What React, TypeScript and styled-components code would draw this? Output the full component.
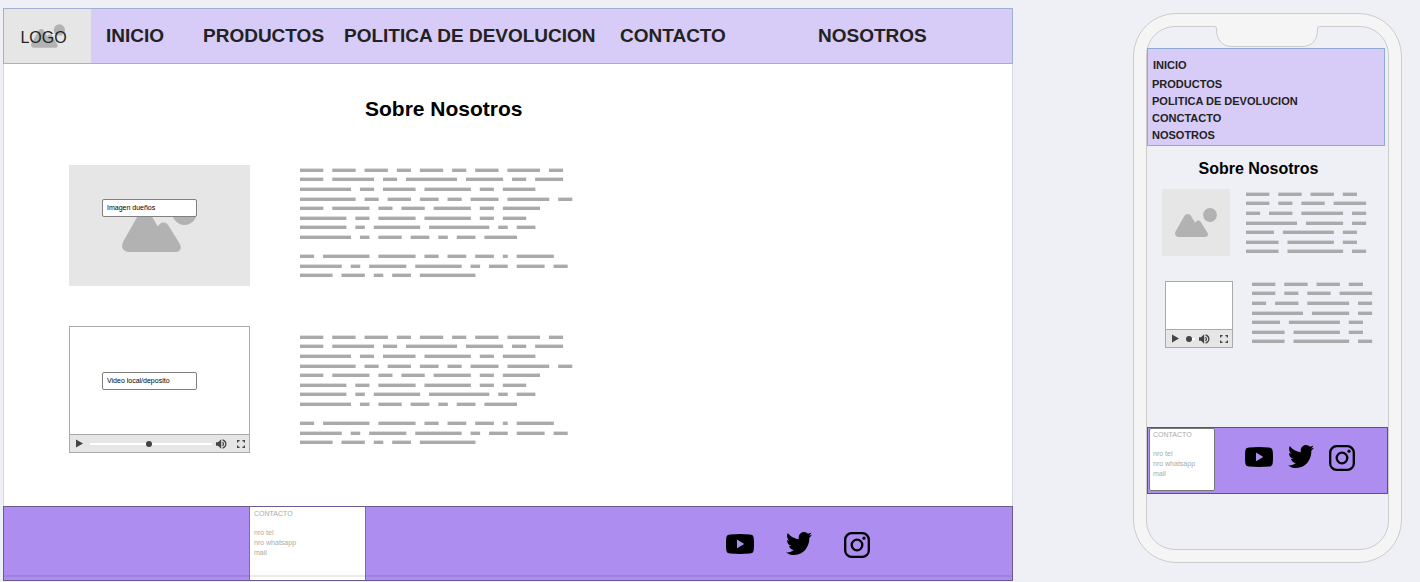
import React from "react";
import styled, { createGlobalStyle } from "styled-components";

const line = "#aaaaaa";
const canvas = "#eff0f5";
const lilac = "#d7ccf7";
const violet = "#ad8ef0";

const GlobalStyle = createGlobalStyle`
  * { box-sizing: border-box; }
  body {
    margin: 0;
    background: ${canvas};
    color: #000;
    font-family: "Liberation Sans", Arial, Helvetica, sans-serif;
  }
  h1, h2, p, figure, ul { margin: 0; padding: 0; }
  svg { display: block; }
`;

const Board = styled.div`
  display: grid;
  grid-template-columns: minmax(0, 1fr) auto;
  align-items: start;
  gap: 120px;
  padding: 8px 18px 0 3px;
`;

/* Desktop frame */
const Desktop = styled.section`
  background: #fff;
`;

const Header = styled.header`
  display: flex;
  height: 56px;
  background: ${lilac};
  border: 1px solid #9fb2d2;
`;

const Logo = styled.a`
  display: grid;
  place-items: center;
  width: 87px;
  background: #e6e6e6;
  color: #222;
  font-size: 16px;
  line-height: 20px;
  text-decoration: none;
  > * { grid-area: 1 / 1; }
`;

const LogoText = styled.span`
  padding: 4px 8px 0 0;
`;

const DesktopNav = styled.nav`
  flex: 1;
  display: grid;
  grid-template-columns:
    minmax(0, 97fr) minmax(0, 141fr) minmax(0, 276fr)
    minmax(0, 198fr) minmax(0, 194fr);
  align-items: center;
  padding-left: 15px;
`;

const NavLink = styled.a<{ $small?: boolean }>`
  color: #222;
  font-weight: bold;
  font-size: ${(p) => (p.$small ? 11 : 19)}px;
  line-height: ${(p) => (p.$small ? 17 : 22)}px;
  white-space: nowrap;
  text-decoration: none;
`;

const Main = styled.main`
  padding: 33px 65px 53px;
  border: solid #d9dadf;
  border-width: 0 1px;
`;

const Title = styled.h1`
  padding-left: 296px;
  font-size: 21px;
  line-height: 24px;
`;

const Rows = styled.div`
  display: grid;
  gap: 40px;
  margin-top: 44px;
`;

const Row = styled.div`
  display: grid;
  grid-template-columns: 181px minmax(0, 1fr);
  gap: 50px;
`;

const Copy = styled.div<{ $top: number }>`
  padding-top: ${(p) => p.$top}px;
`;

const Picture = styled.figure<{ $height: number }>`
  position: relative;
  display: grid;
  place-items: center;
  height: ${(p) => p.$height}px;
  background: #e6e6e6;
`;

const Tag = styled.figcaption<{ $top: number; $left: number }>`
  position: absolute;
  top: ${(p) => p.$top}px;
  left: ${(p) => p.$left}px;
  width: 95px;
  padding: 0 4px;
  border: 1px solid #808080;
  border-radius: 2px;
  background: #fff;
  font-size: 7px;
  line-height: 16px;
`;

const Player = styled.figure<{ $height: number }>`
  position: relative;
  display: flex;
  flex-direction: column;
  height: ${(p) => p.$height}px;
  border: 1px solid ${line};
  background: #fff;
`;

const Controls = styled.div`
  display: flex;
  align-items: center;
  height: 18px;
  margin-top: auto;
  padding: 0 4px 0 6px;
  border-top: 1px solid ${line};
  background: #e6e6e6;
`;

const ControlButton = styled.button<{ $gap?: number }>`
  margin: 0 ${(p) => p.$gap ?? 0}px 0 0;
  padding: 0;
  border: 0;
  background: none;
  color: #444;
`;

const Seek = styled.input`
  flex: 1;
  appearance: none;
  width: 0;
  min-width: 0;
  height: 6px;
  margin: 0 4px 0 0;
  background: linear-gradient(#fff, #fff) center / 100% 2px no-repeat;
  &::-webkit-slider-thumb {
    appearance: none;
    width: 6px;
    height: 6px;
    border-radius: 50%;
    background: #444;
  }
`;

const Footer = styled.footer`
  position: relative;
  display: grid;
  grid-template-columns: 245px 117px minmax(0, 1fr);
  height: 75px;
  background: ${violet};
  border: 1px solid #6b5a90;
  &::after {
    content: "";
    position: absolute;
    inset: auto 0 3px;
    height: 2px;
    background: rgba(0, 0, 0, 0.08);
  }
`;

const Contact = styled.address<{ $mobile?: boolean }>`
  padding: ${(p) => (p.$mobile ? "1px 3px" : "2px 4px")};
  border: solid #777;
  border-width: ${(p) => (p.$mobile ? "1px" : "0 1px")};
  border-radius: ${(p) => (p.$mobile ? 2 : 0)}px;
  background: #fff;
  color: #aaa;
  font-size: 7px;
  font-style: normal;
  line-height: 10px;
`;

const ContactTitle = styled.h2`
  margin-bottom: 9px;
  font-size: 7px;
  font-weight: normal;
`;

const Social = styled.div<{ $mobile?: boolean }>`
  display: flex;
  justify-content: flex-end;
  gap: ${(p) => (p.$mobile ? 15 : 32)}px;
  padding: ${(p) => (p.$mobile ? "17px 32px 0 0" : "25px 142px 0 0")};
  a { color: #000; }
  a:first-child { padding-top: 2px; }
`;

/* Phone frame */
const Phone = styled.section`
  width: 269px;
  margin-top: 5px;
  padding: 12px;
  border: 1px solid #ccc;
  border-radius: 43px;
  background: #f5f5f5;
`;

const Screen = styled.div`
  position: relative;
  padding: 21px 0 55px;
  border: 1px solid #ccc;
  border-radius: 29px;
  background: ${canvas};
`;

const Notch = styled.svg`
  position: absolute;
  top: -1px;
  left: 67px;
`;

const PhoneNav = styled.nav`
  display: grid;
  margin-right: 3px;
  padding: 8px 4px 0;
  height: 98px;
  align-content: start;
  border: 1px solid #8fa9d3;
  background: ${lilac};
  a:first-child { margin: 0 0 2px 1px; }
`;

const PhoneTitle = styled.h1`
  margin-top: 13px;
  padding-right: 18px;
  font-size: 16px;
  line-height: 20px;
  text-align: center;
`;

const PhoneRow = styled.div<{ $top: number; $left: number; $gap: number }>`
  display: grid;
  grid-template-columns: 68px minmax(0, 1fr);
  gap: ${(p) => p.$gap}px;
  margin-top: ${(p) => p.$top}px;
  padding-left: ${(p) => p.$left}px;
`;

const PhoneFooter = styled.footer`
  display: grid;
  grid-template-columns: 66px minmax(0, 1fr);
  height: 67px;
  margin-top: 78px;
  padding: 0 0 2px 1px;
  border: 1px solid #5f4f85;
  background: ${violet};
`;

const longText = [
  [5, 5, 5, 3, 5, 3, 5, 7, 3],
  [5, 9, 3, 11, 8, 3, 6],
  [11, 3, 7, 10, 3, 7],
  [12, 3, 5, 4, 3, 6, 9, 3],
  [5, 8, 3, 5, 8, 3, 8],
  [10, 3, 8, 10, 3, 5],
  [10, 2, 10, 13, 2, 4],
  [11, 2, 5, 4, 2, 4, 7],
  [],
  [3, 10, 8, 3, 4, 4, 1, 8],
  [9, 2, 8, 10, 2, 4, 6, 3],
  [7, 5, 2, 4, 12],
];

const shortText = [
  [5, 5, 5, 3],
  [5, 3, 5, 7],
  [3, 5, 9, 3],
  [11, 8, 3],
  [6, 11, 3],
  [7, 10, 3],
  [7, 12, 3],
];

/* Placeholder copy: every number is a word length in characters. */
function Placeholder({ lines, width }: { lines: number[][]; width: number }) {
  const unit = 4.61;
  return (
    <svg width={width} height={Math.round(lines.length * 9.6)} fill={line} aria-hidden="true">
      {lines.map((words, row) => {
        let column = 0;
        return words.map((length, i) => {
          const x = column * unit;
          column += length + 2;
          return (
            <rect
              key={`${row}-${i}`}
              x={x}
              y={Math.floor(row * 9.6 + 0.3) + 0.6}
              width={length * unit + 0.3}
              height={3.4}
            />
          );
        });
      })}
    </svg>
  );
}

function Mountains({ width, height }: { width: number; height: number }) {
  return (
    <svg width={width} height={height} viewBox="0 0 42 29" fill="#b2b2b2" aria-hidden="true">
      <path d="M4 29C.4 29-.8 26 .7 23.2L9.2 8.2C11 5.2 14.4 5.2 16.200 8.200L20 14.800 21.300 13.300C22.500 12.100 24.600 12.200 25.800 13.900L32.400 24.600C33.700 27 32.500 29 30 29Z" />
      <circle cx="35" cy="7" r="6.9" />
    </svg>
  );
}

function PlayerControls({ value }: { value: number }) {
  return (
    <Controls>
      <ControlButton aria-label="Reproducir" $gap={7}>
        <svg width="7" height="9" fill="currentColor"><path d="M0 .5 7 4.500 0 8.500Z" /></svg>
      </ControlButton>
      <Seek type="range" aria-label="Progreso" defaultValue={value} />
      <ControlButton aria-label="Volumen" $gap={10}>
        <svg width="11" height="10" viewBox="0 0 11 10" fill="currentColor">
          <path d="M0 3.2H2L5.200 .3V9.700L2 6.800H0Z" />
          <path d="M6.600 3Q8.200 5 6.600 7M6.600 .9C11 2.400 11 7.600 6.600 9.100" fill="none" stroke="currentColor" strokeWidth="1.200" />
        </svg>
      </ControlButton>
      <ControlButton aria-label="Pantalla completa">
        <svg width="8" height="8" fill="none" stroke="currentColor" strokeWidth="1.400">
          <path d="M.6 2.600V.6H2.600M5.400 .6H7.400V2.600M7.400 5.400V7.400H5.400M2.600 7.400H.6V5.400" />
        </svg>
      </ControlButton>
    </Controls>
  );
}

function ContactCard({ mobile }: { mobile?: boolean }) {
  return (
    <Contact $mobile={mobile}>
      <ContactTitle>CONTACTO</ContactTitle>
      <p>nro tel</p>
      <p>nro whatsapp</p>
      <p>mail</p>
    </Contact>
  );
}

function SocialLinks({ mobile }: { mobile?: boolean }) {
  return (
    <Social $mobile={mobile}>
      <a href="#youtube" aria-label="YouTube">
        <svg width="28" height="20" viewBox="0 0 28 20" fill="currentColor">
          <path fillRule="evenodd" d="M4 .5Q14-.4 24 .5C27 .7 27.6 2.2 27.8 5Q28.2 10 27.8 15C27.6 17.8 27 19.3 24 19.5Q14 20.4 4 19.5C1 19.3 .4 17.8 .2 15Q-.2 10 .2 5C.4 2.2 1 .7 4 .5ZM11 5.6V14.2L18.3 9.9Z" />
        </svg>
      </a>
      <a href="#twitter" aria-label="Twitter">
        <svg width="26" height="23" viewBox="0 48 512 416" preserveAspectRatio="none" fill="currentColor">
          <path d="M459.37 151.716c.325 4.548.325 9.097.325 13.645 0 138.72-105.583 298.558-298.558 298.558-59.452 0-114.68-17.219-161.137-47.106 8.447.974 16.568 1.299 25.34 1.299 49.055 0 94.213-16.568 130.274-44.832-46.132-.975-84.792-31.188-98.112-72.772 6.498.974 12.995 1.624 19.818 1.624 9.421 0 18.843-1.3 27.614-3.573-48.081-9.747-84.143-51.98-84.143-102.985v-1.299c13.969 7.797 30.214 12.67 47.431 13.319-28.264-18.843-46.781-51.005-46.781-87.391 0-19.492 5.197-37.36 14.294-52.954 51.655 63.675 129.3 105.258 216.365 109.807-1.624-7.797-2.599-15.918-2.599-24.04 0-57.828 46.782-104.934 104.934-104.934 30.213 0 57.502 12.67 76.67 33.137 23.715-4.548 46.456-13.32 66.599-25.34-7.798 24.366-24.366 44.833-46.132 57.827 21.117-2.273 41.584-8.122 60.426-16.243-14.292 20.791-32.161 39.308-52.628 54.253z" />
        </svg>
      </a>
      <a href="#instagram" aria-label="Instagram">
        <svg width="26" height="26" viewBox="0 0 26 26" fill="none" stroke="currentColor" strokeWidth="2.3">
          <rect x="1.2" y="1.2" width="23.6" height="23.6" rx="6.4" />
          <circle cx="13" cy="13" r="5.3" />
          <circle cx="20" cy="6.2" r="1.6" fill="currentColor" stroke="none" />
        </svg>
      </a>
    </Social>
  );
}

const sections = [
  ["#inicio", "INICIO"],
  ["#productos", "PRODUCTOS"],
  ["#politica", "POLITICA DE DEVOLUCION"],
  ["#contacto", "CONTACTO"],
  ["#nosotros", "NOSOTROS"],
];

const phoneSections = [
  ["#inicio", "INICIO"],
  ["#productos", "PRODUCTOS"],
  ["#politica", "POLITICA DE DEVOLUCION"],
  ["#contacto", "CONCTACTO"],
  ["#nosotros", "NOSOTROS"],
];

export default function App() {
  return (
    <>
      <GlobalStyle />
      <Board>
        <Desktop>
          <Header>
            <Logo href="#inicio">
              <Mountains width={34} height={24} />
              <LogoText>LOGO</LogoText>
            </Logo>
            <DesktopNav>
              {sections.map(([href, label]) => (
                <NavLink key={href} href={href}>{label}</NavLink>
              ))}
            </DesktopNav>
          </Header>
          <Main>
            <Title>Sobre Nosotros</Title>
            <Rows>
              <Row>
                <Picture $height={121}>
                  <Mountains width={75} height={52} />
                  <Tag $top={34} $left={33}>Imagen dueños</Tag>
                </Picture>
                <Copy $top={3}><Placeholder lines={longText} width={274} /></Copy>
              </Row>
              <Row>
                <Player $height={127}>
                  <Tag $top={45} $left={32}>Video local/deposito</Tag>
                  <PlayerControls value={48} />
                </Player>
                <Copy $top={9}><Placeholder lines={longText} width={274} /></Copy>
              </Row>
            </Rows>
          </Main>
          <Footer>
            <span />
            <ContactCard />
            <SocialLinks />
          </Footer>
        </Desktop>

        <Phone>
          <Screen>
            <Notch width="106" height="22" viewBox="0 0 106 22">
              <path d="M0 0H106V.5H105Q103.500 .5 103.500 3C103.500 14 98 20.500 88 20.500H18C8 20.500 2.500 14 2.500 3Q2.500 .5 1 .5H0Z" fill="#f5f5f5" />
              <path d="M0 .5H1Q2.500 .5 2.500 3C2.500 14 8 20.500 18 20.500H88C98 20.500 103.500 14 103.500 3Q103.500 .5 105 .5H106" fill="none" stroke="#ccc" />
            </Notch>
            <PhoneNav>
              {phoneSections.map(([href, label]) => (
                <NavLink key={href} href={href} $small>{label}</NavLink>
              ))}
            </PhoneNav>
            <PhoneTitle>Sobre Nosotros</PhoneTitle>
            <PhoneRow $top={10} $left={15} $gap={16}>
              <Picture $height={67}><Mountains width={42} height={29} /></Picture>
              <Copy $top={3}><Placeholder lines={shortText} width={122} /></Copy>
            </PhoneRow>
            <PhoneRow $top={22} $left={18} $gap={19}>
              <Player $height={67}><PlayerControls value={0} /></Player>
              <Copy $top={1}><Placeholder lines={shortText} width={122} /></Copy>
            </PhoneRow>
            <PhoneFooter>
              <ContactCard mobile />
              <SocialLinks mobile />
            </PhoneFooter>
          </Screen>
        </Phone>
      </Board>
    </>
  );
}
